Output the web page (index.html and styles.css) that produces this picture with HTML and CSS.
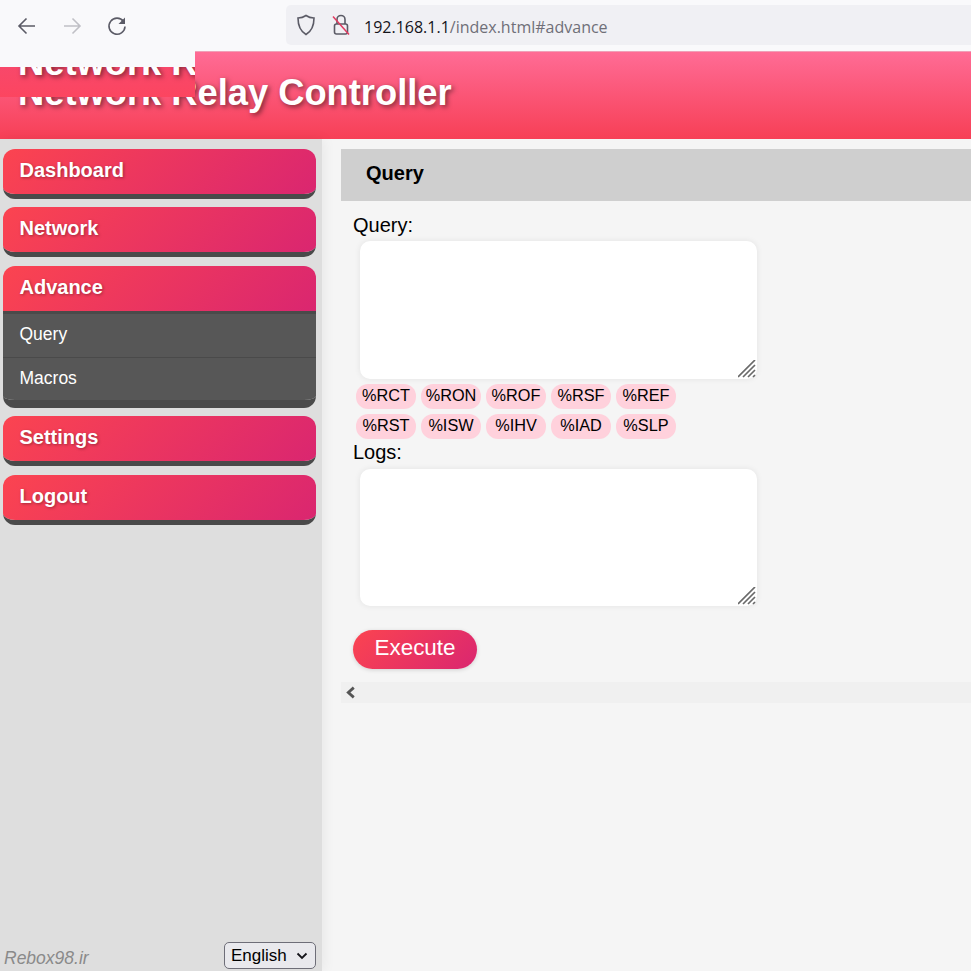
FILE: index.html
```html
<!DOCTYPE html>
<html lang="en">
<head>
<meta charset="utf-8">
<title>Network Relay Controller</title>
<link rel="stylesheet" href="styles.css">
</head>
<body>
<div class="toolbar">
  <div class="nav-buttons">
    <svg class="nav-icon" viewBox="0 0 20 20"><path d="M18 10H2.500M9.500 2.500L2 10l7.500 7.500"/></svg>
    <svg class="nav-icon nav-icon-off" viewBox="0 0 20 20"><path d="M2 10h15.500M10.500 2.500L18 10l-7.500 7.500"/></svg>
    <svg class="nav-icon" viewBox="0 0 20 20"><path d="M16.500 5.500A8 8 0 1 0 18 10.500"/><path class="nav-fill" d="M18 1.500V8h-6.500z"/></svg>
  </div>
  <div class="address">
    <svg class="addr-icon" viewBox="0 0 20 22"><path d="M10 1.500c2.500 1.800 5 2.500 8 2.500 0 8-2 13-8 16.500C4 17 2 12 2 4c3 0 5.500-.7 8-2.500z"/></svg>
    <svg class="addr-icon addr-lock" viewBox="0 0 20 22"><path d="M6 10V5.500a4 4 0 0 1 8 0V10"/><rect x="3.500" y="10" width="13" height="10" rx="2"/><path class="lock-slash" d="M2 2.500L18 20.500"/></svg>
    <span class="url"><span class="url-host">192.168.1.1</span>/index.html#advance</span>
  </div>
</div>

<header class="banner">
  <h1 class="banner-title">Network Relay Controller</h1>
  <div class="ghost"><div class="ghost-text">Network R</div></div>
</header>

<div class="layout">
  <aside class="sidebar">
    <nav class="menu">
      <div class="menu-group"><div class="menu-title">Dashboard</div></div>
      <div class="menu-group"><div class="menu-title">Network</div></div>
      <div class="menu-group menu-group-open">
        <div class="menu-title">Advance</div>
        <div class="menu-sub">Query</div>
        <div class="menu-sub menu-sub-last">Macros</div>
      </div>
      <div class="menu-group"><div class="menu-title">Settings</div></div>
      <div class="menu-group"><div class="menu-title">Logout</div></div>
    </nav>
    <div class="side-footer">
      <span class="credit">Rebox98.ir</span>
      <div class="lang">
        <select class="lang-select"><option>English</option></select>
        <svg class="lang-chevron" viewBox="0 0 12 8"><path d="M1.500 1.500L6 6l4.500-4.500"/></svg>
      </div>
    </div>
  </aside>

  <main class="main">
    <section class="panel">
      <h2 class="panel-title">Query</h2>
      <div class="panel-body">
        <label class="field-label">Query:</label>
        <div class="area-wrap">
          <textarea class="area area-query"></textarea>
          <svg class="grip" viewBox="0 0 18 18"><path d="M0 17L17 0M5 17L17 5M10 17l7-7M15 17l2-2"/></svg>
        </div>
        <div class="chips">
          <span class="chip">%RCT</span><span class="chip">%RON</span><span class="chip">%ROF</span><span class="chip">%RSF</span><span class="chip">%REF</span>
          <span class="chip">%RST</span><span class="chip">%ISW</span><span class="chip">%IHV</span><span class="chip">%IAD</span><span class="chip">%SLP</span>
        </div>
        <label class="field-label field-label-logs">Logs:</label>
        <div class="area-wrap area-wrap-logs">
          <textarea class="area area-logs"></textarea>
          <svg class="grip" viewBox="0 0 18 18"><path d="M0 17L17 0M5 17L17 5M10 17l7-7M15 17l2-2"/></svg>
        </div>
        <button class="execute">Execute</button>
      </div>
      <div class="hscroll">
        <svg class="hscroll-arrow" viewBox="0 0 10 12"><path d="M8 1.500L3 6l5 4.500"/></svg>
      </div>
    </section>
  </main>
</div>
</body>
</html>
```

FILE: styles.css
```css
* { box-sizing: border-box; }

html, body {
  margin: 0;
  height: 971px;
  overflow: hidden;
  background: #f5f5f5;
  font-family: "Liberation Sans", Arial, sans-serif;
  color: #000;
}

/* browser chrome */
.toolbar {
  height: 51px;
  background: #f9f9fb;
  display: flex;
  align-items: center;
  padding-left: 17px;
}

.nav-buttons {
  display: flex;
  gap: 25px;
  width: 269px;
}

.nav-icon {
  width: 20px;
  height: 20px;
  fill: none;
  stroke: #5b5b66;
  stroke-width: 1.600;
}

.nav-icon-off { stroke: #c0c0c6; }

.nav-fill {
  fill: #5b5b66;
  stroke: none;
}

.address {
  flex: 1;
  height: 40px;
  margin-top: -1px;
  background: #f0f0f4;
  border-radius: 5px 0 0 5px;
  display: flex;
  align-items: center;
  padding-left: 10px;
}

.addr-icon {
  width: 20px;
  height: 22px;
  fill: none;
  stroke: #5b5b66;
  stroke-width: 1.600;
  flex: none;
}

.addr-lock {
  margin-left: 15px;
}

.lock-slash { stroke: #e0395f; stroke-width: 1.500; }

.url {
  margin: 4px 0 0 13px;
  font-family: "Open Sans", sans-serif;
  font-size: 16px;
  letter-spacing: 0;
  color: #6f6f78;
}

.url-host { color: #15141a; }

/* banner */
.banner {
  position: relative;
  height: 88px;
  padding: 20px 0 0 18px;
  background: linear-gradient(to bottom, #ff6c96, #f73f56);
  box-shadow: inset 0 1px 0 #f0a0b8;
}

.banner-title {
  margin: 0;
  font-size: 36.300px;
  line-height: 1.2;
  font-weight: 700;
  color: #fff;
  text-shadow: 2px 2px 5px rgba(0, 0, 0, 0.5);
}

.ghost {
  position: absolute;
  left: 0;
  top: 0;
  width: 195px;
  height: 46px;
  overflow: hidden;
  border-top: 16px solid #f9f9fb;
  background: linear-gradient(to bottom, #f8486a, #fc4560);
  padding-left: 18px;
}

.ghost-text {
  margin-top: -26px;
  font-size: 36.300px;
  line-height: 1.2;
  font-weight: 700;
  color: #fff;
  white-space: nowrap;
  text-shadow: 2px 2px 5px rgba(0, 0, 0, 0.5);
}

/* layout */
.layout {
  display: flex;
  height: 832px;
}

.sidebar {
  width: 322px;
  flex: none;
  background: #dedede;
  box-shadow: 2px 0 12px rgba(0, 0, 0, 0.06);
  padding: 10px 6px 2px 3px;
  display: flex;
  flex-direction: column;
  position: relative;
}

.menu {
  display: flex;
  flex-direction: column;
  gap: 8.400px;
}

.menu-group {
  border-radius: 12px;
  overflow: hidden;
  border-bottom: 5px solid #4a4a4a;
}

.menu-group-open { border-bottom-width: 8px; }

.menu-title {
  height: 45px;
  padding: 9px 0 0 16.500px;
  font-size: 20px;
  line-height: 24px;
  font-weight: 700;
  color: #fff;
  text-shadow: 1px 1px 3px rgba(0, 0, 0, 0.35);
  background: linear-gradient(135deg, #fb4450, #da2670);
}

.menu-sub {
  height: 46px;
  padding: 9.500px 0 0 16.500px;
  background: #575757;
  font-size: 17.500px;
  line-height: 22px;
  color: #fff;
  border-top: 3px solid #4a4a4a;
}

.menu-sub-last {
  height: 43px;
  padding-top: 9px;
  border-top-width: 1px;
}

.side-footer {
  margin-top: auto;
  display: flex;
  justify-content: space-between;
  align-items: flex-end;
}

.credit {
  padding-left: 1px;
  font-size: 17.500px;
  font-style: italic;
  color: #8a8a8a;
}

.lang {
  position: relative;
  width: 92px;
  height: 27px;
}

.lang-select {
  appearance: none;
  width: 100%;
  height: 100%;
  padding: 0 0 0 6px;
  border: 1px solid #6e6e78;
  border-radius: 5px;
  background: #e9e9ed;
  font-family: "Liberation Sans", Arial, sans-serif;
  font-size: 17px;
  color: #000;
}

.lang-chevron {
  position: absolute;
  right: 8px;
  top: 10px;
  width: 12px;
  height: 8px;
  fill: none;
  stroke: #15141a;
  stroke-width: 1.800;
}

/* main */
.main {
  flex: 1;
  min-width: 0;
  padding: 10px 0 0 19px;
}

.panel-title {
  margin: 0;
  height: 52px;
  padding: 12px 0 0 25px;
  background: #cfcfcf;
  font-size: 20px;
  line-height: 24px;
  font-weight: 700;
}

.panel-body {
  padding: 12px 0 0 12px;
}

.field-label {
  display: block;
  font-size: 20px;
  line-height: 24px;
}

.field-label-logs { margin-top: 1px; }

.area-wrap {
  position: relative;
  width: 397px;
  margin: 4px 0 0 7px;
}

.area-wrap-logs { margin-top: 5px; }

.area {
  display: block;
  width: 100%;
  border: 0;
  border-radius: 10px;
  background: #fff;
  box-shadow: 0 0 6px rgba(0, 0, 0, 0.08);
  resize: none;
  outline: 0;
  padding: 8px;
}

.area-query { height: 138px; }
.area-logs { height: 137px; }

.grip {
  position: absolute;
  right: 1px;
  bottom: 1px;
  width: 18px;
  height: 18px;
  fill: none;
  stroke: #6a6a6a;
  stroke-width: 1.700;
}

.chips {
  display: grid;
  grid-template-columns: repeat(5, 60px);
  column-gap: 5px;
  row-gap: 5.500px;
  margin: 5px 0 0 3px;
}

.chip {
  height: 24.500px;
  border-radius: 12px;
  background: #ffd1dc;
  font-size: 16.300px;
  line-height: 23px;
  text-align: center;
}

.execute {
  display: block;
  width: 124px;
  height: 39px;
  margin-top: 24px;
  padding: 0 0 2px;
  border: 0;
  border-radius: 20px;
  background: linear-gradient(135deg, #fb4450, #da2670);
  box-shadow: 0 1px 4px rgba(0, 0, 0, 0.15);
  font-family: "Liberation Sans", Arial, sans-serif;
  font-size: 22.400px;
  color: #fff;
}

.hscroll {
  height: 21px;
  margin-top: 13px;
  background: #f0f0f0;
  display: flex;
  align-items: center;
  padding-left: 4px;
}

.hscroll-arrow {
  width: 11px;
  height: 13px;
  fill: none;
  stroke: #555;
  stroke-width: 2.600;
}
```
